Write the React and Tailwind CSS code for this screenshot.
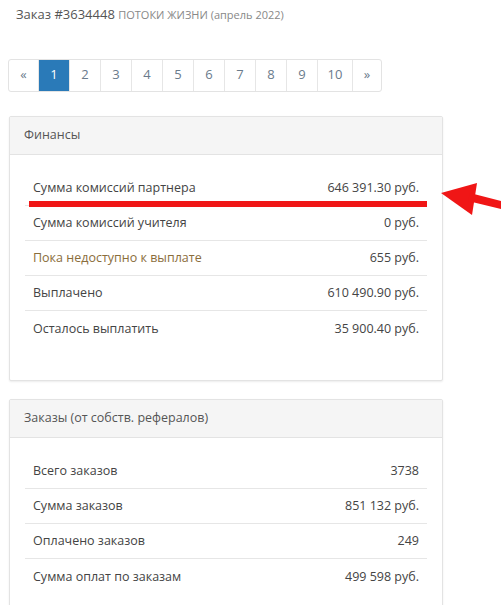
import React from 'react';

const finance = [
  { label: 'Сумма комиссий партнера', value: '646 391.30 руб.', marked: true },
  { label: 'Сумма комиссий учителя', value: '0 руб.' },
  { label: 'Пока недоступно к выплате', value: '655 руб.', warn: true },
  { label: 'Выплачено', value: '610 490.90 руб.' },
  { label: 'Осталось выплатить', value: '35 900.40 руб.' },
];

const orders = [
  { label: 'Всего заказов', value: '3738' },
  { label: 'Сумма заказов', value: '851 132 руб.' },
  { label: 'Оплачено заказов', value: '249' },
  { label: 'Сумма оплат по заказам', value: '499 598 руб.' },
];

const pages = ['«', '1', '2', '3', '4', '5', '6', '7', '8', '9', '10', '»'];

const Row = ({ row, last }) => (
  <div
    className={`relative flex justify-between items-center h-[35px] pt-[2px] pl-2 pr-[8px] text-[12.5px] ${
      last ? '' : 'border-b border-[#e6e6e6]'
    }`}
  >
    <span className={row.warn ? 'text-[#8a6d3b]' : 'text-[#444]'}>{row.label}</span>
    <span className="text-[#444]">{row.value}</span>
    {row.marked && (
      <div className="absolute left-[4px] right-0 bottom-[-2px] h-[6px] bg-[#f01616]" />
    )}
  </div>
);

const Panel = ({ title, rows }) => (
  <div className="w-[434px] bg-white border border-[#e3e3e3] rounded-[2px] shadow-[0_1px_2px_rgba(0,0,0,0.08)]">
    <div className="h-[38px] flex items-center px-[14px] bg-[#f5f5f5] border-b border-[#e3e3e3] text-[12.5px] text-[#555]">
      {title}
    </div>
    <div className="px-[15px] pt-[16px] pb-[34px]">
      {rows.map((r, i) => (
        <Row key={r.label} row={r} last={i === rows.length - 1} />
      ))}
    </div>
  </div>
);

const App = () => {
  return (
    <div
      className="relative w-[501px] h-[605px] overflow-hidden bg-white"
      style={{ fontFamily: '"Open Sans", "Liberation Sans", sans-serif' }}
    >
      <div className="pl-4 pt-[5px] text-[13px] text-[#555]">
        Заказ #3634448 <span className="text-[11px] text-[#888]">ПОТОКИ ЖИЗНИ (апрель 2022)</span>
      </div>

      <div className="ml-2 mt-[34px] inline-flex border border-[#e3e3e3] rounded-[3px] overflow-hidden">
        {pages.map((p, i) => (
          <div
            key={p}
            className={`h-[31px] flex items-center justify-center text-[13px] ${
              p === '10' ? 'w-[35px]' : p === '«' || p === '»' ? 'w-[29px]' : 'w-[31px]'
            } ${i > 0 ? 'border-l border-[#e6e6e6]' : ''} ${
              p === '1' ? 'bg-[#2a7ab8] text-white' : 'text-[#6a7b8c]'
            } ${p === '«' || p === '»' ? 'text-[11px]' : ''}`}
          >
            {p}
          </div>
        ))}
      </div>

      <div className="ml-[9px] mt-[24px]">
        <Panel title="Финансы" rows={finance} />
      </div>
      <div className="ml-[9px] mt-[18px]">
        <Panel title="Заказы (от собств. рефералов)" rows={orders} />
      </div>

      {/* red annotation arrow */}
      <svg className="absolute left-[436px] top-[178px]" width="65" height="42" viewBox="0 0 65 42">
        <polygon points="5,15 41,5 36,37" fill="#f01616" />
        <polygon points="34,15 65,23 65,31 32,23" fill="#f01616" />
      </svg>
    </div>
  );
};

export default App;
